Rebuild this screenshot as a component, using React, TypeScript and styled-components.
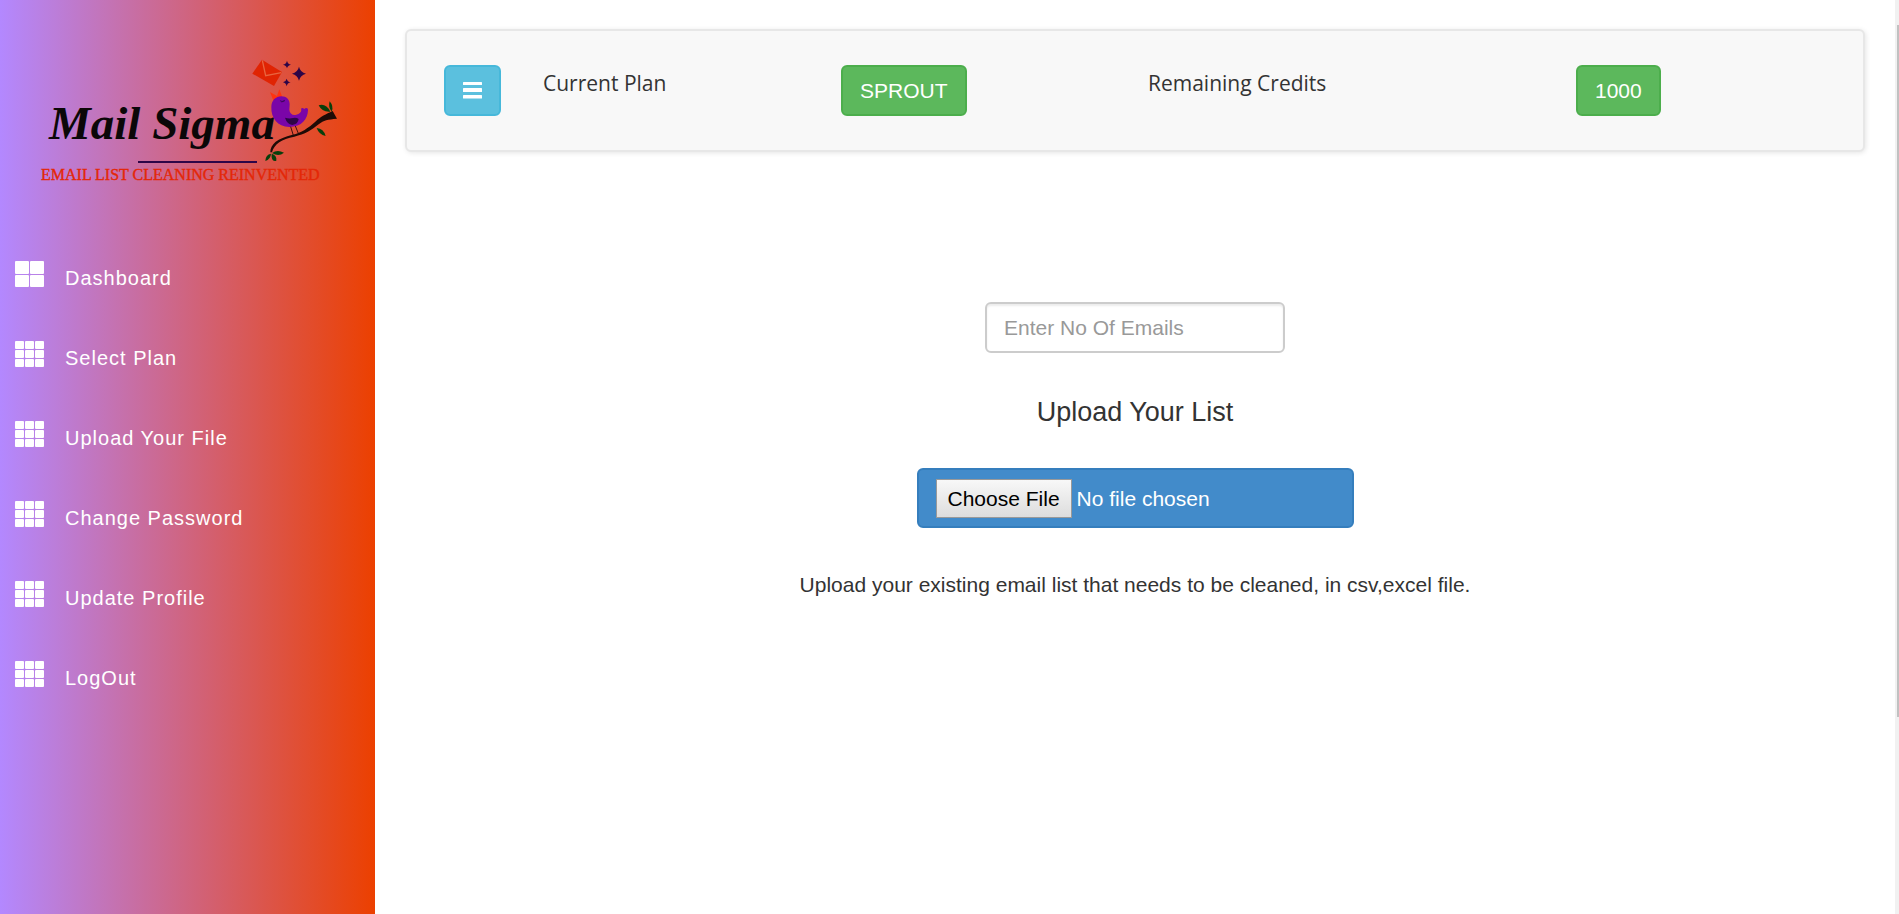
import React from "react";
import styled, { createGlobalStyle } from "styled-components";

const GlobalStyle = createGlobalStyle`
  *, *::before, *::after { box-sizing: border-box; }
  body {
    margin: 0;
    background: #fff;
    color: #333;
    font-family: "Liberation Sans", Arial, sans-serif;
    font-size: 21px;
    line-height: 30px;
  }
  input, button { font: inherit; }
`;

const Page = styled.div`
  display: flex;
  min-height: 100vh;
`;

const Sidebar = styled.aside`
  flex: 0 0 375px;
  background: linear-gradient(to right, #b388ff, #ec4000);
`;

const LogoLink = styled.a`
  display: block;
  svg { display: block; }
`;

const Nav = styled.nav`
  padding-top: 40px;
`;

const NavLink = styled.a`
  display: flex;
  align-items: flex-start;
  gap: 21px;
  height: 80px;
  padding: 21px 15px;
  color: #fff;
  font-size: 20px;
  letter-spacing: 1px;
  text-decoration: none;
`;

const NavLabel = styled.span`
  padding-top: 2px;
`;

const TileGrid = styled.span<{ $columns: number }>`
  display: grid;
  grid-template-columns: repeat(${(p) => p.$columns}, 1fr);
  gap: 1px;
  width: 29px;
  height: 26px;
`;

const Tile = styled.span`
  border-radius: 1px;
  background: #fff;
`;

const Main = styled.main`
  flex: 1;
  min-width: 0;
  padding: 29px 30px;
`;

const StatusBar = styled.header`
  display: grid;
  grid-template-columns: 99px 298fr 307fr 428fr 287fr;
  justify-items: start;
  padding: 34px 0 34px 37px;
  border: 2px solid #e7e7e7;
  border-radius: 6px;
  background: #f8f8f8;
  box-shadow: 1px 1px 5px rgba(0, 0, 0, 0.1);
`;

const StatusLabel = styled.span`
  padding-top: 3px;
  font-family: "Open Sans", sans-serif;
`;

const Button = styled.button<{ $tone: "info" | "success" }>`
  height: 51px;
  padding: 0 17px;
  border: 2px solid ${(p) => (p.$tone === "info" ? "#46b8da" : "#4cae4c")};
  border-radius: 6px;
  background: ${(p) => (p.$tone === "info" ? "#5bc0de" : "#5cb85c")};
  color: #fff;
  svg { display: block; }
`;

const UploadForm = styled.form`
  display: flex;
  flex-direction: column;
  align-items: center;
  padding-top: 150px;
`;

const CountInput = styled.input`
  width: 300px;
  height: 51px;
  padding: 0 17px;
  border: 2px solid #ccc;
  border-radius: 6px;
  background: #fff;
  box-shadow: inset 0 2px 2px rgba(0, 0, 0, 0.075);
  color: #555;
  &::placeholder { color: #999; opacity: 1; }
`;

const Title = styled.label`
  margin: 44px 0 41px;
  font-size: 27px;
`;

const FileInput = styled.input`
  width: 437px;
  height: 60px;
  padding: 9px 17px;
  border: 2px solid #357ebd;
  border-radius: 6px;
  background: #428bca;
  color: #fff;
  &::file-selector-button {
    height: 39px;
    margin: 0 5px 0 0;
    padding: 0 11px;
    border: 1px solid #999;
    border-radius: 0;
    background: linear-gradient(#f8f8f8, #ddd);
    color: #000;
    font: inherit;
  }
`;

const Hint = styled.p`
  margin: 42px 0 0;
`;

const ScrollTrack = styled.div`
  flex: 0 0 4px;
  padding: 25px 0 0 2px;
  background: #f1f1f1;
`;

const ScrollThumb = styled.div`
  height: 692px;
  background: #c1c1c1;
`;

const Logo = () => (
  <svg width="375" height="200" viewBox="0 0 375 200" role="img" aria-label="Mail Sigma">
    <text x="49" y="139" fontFamily="'Liberation Serif', serif" fontStyle="italic" fontWeight="700" fontSize="47" fill="#0b0708">
      Mail Sigma
    </text>
    <path d="M138 162H257" stroke="#2d0547" strokeWidth="2" />
    <text x="41" y="180" fontFamily="'Liberation Serif', serif" fontSize="16" fill="#e42707" stroke="#e42707" strokeWidth="0.4">
      EMAIL LIST CLEANING REINVENTED
    </text>
    <g transform="translate(240 50) scale(0.3333)">
      <path d="M66 29L126 66L102 108L37 71Z" fill="#e02403" />
      <path d="M67 31L77 77L124 68" fill="none" stroke="#e8643f" strokeWidth="4" />
      <g fill="#2d0547">
        <path d="M177 50Q181 67 198 71Q181 75 177 92Q173 75 156 71Q173 67 177 50Z" />
        <path d="M141 32Q143 42 153 44Q143 46 141 55Q139 46 129 44Q139 42 141 32Z" />
        <path d="M140 86Q142 95 152 97Q142 99 140 109Q138 99 129 97Q138 95 140 86Z" />
      </g>
      <path d="M90 126L111 138L118 118L127 142L102 156Z" fill="#ff3310" />
      <path
        d="M94 172C94 151 108 139 124 139C140 139 149 149 149 163L148 179C149 191 158 197 169 194C179 192 184 186 184 180C181 173 188 172 193 177C197 172 205 173 204 181C203 207 186 231 148 231C112 231 93 203 94 172Z"
        fill="#7a05a8"
      />
      <path d="M120 152Q127 158 135 152M124 156L134 151" fill="none" stroke="#2d0547" strokeWidth="2" />
      <path d="M135 203Q144 206 154 205Q168 200 176 207Q174 223 157 225Q141 222 135 203Z" fill="#2d0547" />
      <path d="M152 230L160 256M166 228L175 250" stroke="#3a0f0f" strokeWidth="3" />
      <path
        d="M91 307C91 282 112 265 158 254C184 248 205 234 226 215C243 199 257 193 278 183L291 206C262 209 252 210 236 223C215 240 195 253 163 260C125 267 103 281 96 307Z"
        fill="#1f0b06"
      />
      <g fill="#083f0b">
        <path d="M236 166Q258 159 271 185Q246 187 236 166Z" />
        <path d="M269 154Q282 169 275 185Q264 171 269 154Z" />
        <path d="M230 234Q251 236 257 258Q237 254 230 234Z" />
        <path d="M96 309Q112 297 132 308Q116 322 96 309Z" />
        <path d="M93 311Q77 313 76 333Q92 328 93 311Z" />
        <path d="M95 311Q111 316 109 332Q93 337 95 311Z" />
      </g>
    </g>
  </svg>
);

const MenuIcon = () => (
  <svg width="19" height="17" viewBox="0 0 19 17" aria-hidden="true">
    <g fill="#fff">
      <rect y="0" width="19" height="3" rx="0.5" />
      <rect y="6" width="19" height="4" rx="0.5" />
      <rect y="13" width="19" height="3.5" rx="0.5" />
    </g>
  </svg>
);

const TileIcon = ({ columns }: { columns: number }) => (
  <TileGrid $columns={columns} aria-hidden="true">
    {Array.from({ length: columns * columns }, (_, i) => (
      <Tile key={i} />
    ))}
  </TileGrid>
);

const links = [
  { label: "Dashboard", columns: 2 },
  { label: "Select Plan", columns: 3 },
  { label: "Upload Your File", columns: 3 },
  { label: "Change Password", columns: 3 },
  { label: "Update Profile", columns: 3 },
  { label: "LogOut", columns: 3 },
];

export default function App() {
  return (
    <>
      <GlobalStyle />
      <Page>
        <Sidebar>
          <LogoLink href="#">
            <Logo />
          </LogoLink>
          <Nav>
            {links.map((link) => (
              <NavLink href="#" key={link.label}>
                <TileIcon columns={link.columns} />
                <NavLabel>{link.label}</NavLabel>
              </NavLink>
            ))}
          </Nav>
        </Sidebar>
        <Main>
          <StatusBar>
            <Button type="button" $tone="info" aria-label="Toggle menu">
              <MenuIcon />
            </Button>
            <StatusLabel>Current Plan</StatusLabel>
            <Button type="button" $tone="success">SPROUT</Button>
            <StatusLabel>Remaining Credits</StatusLabel>
            <Button type="button" $tone="success">1000</Button>
          </StatusBar>
          <UploadForm>
            <CountInput type="text" placeholder="Enter No Of Emails" aria-label="Enter No Of Emails" />
            <Title htmlFor="list-file">Upload Your List</Title>
            <FileInput id="list-file" type="file" accept=".csv,.xls,.xlsx" />
            <Hint>Upload your existing email list that needs to be cleaned, in csv,excel file.</Hint>
          </UploadForm>
        </Main>
        <ScrollTrack aria-hidden="true">
          <ScrollThumb />
        </ScrollTrack>
      </Page>
    </>
  );
}
